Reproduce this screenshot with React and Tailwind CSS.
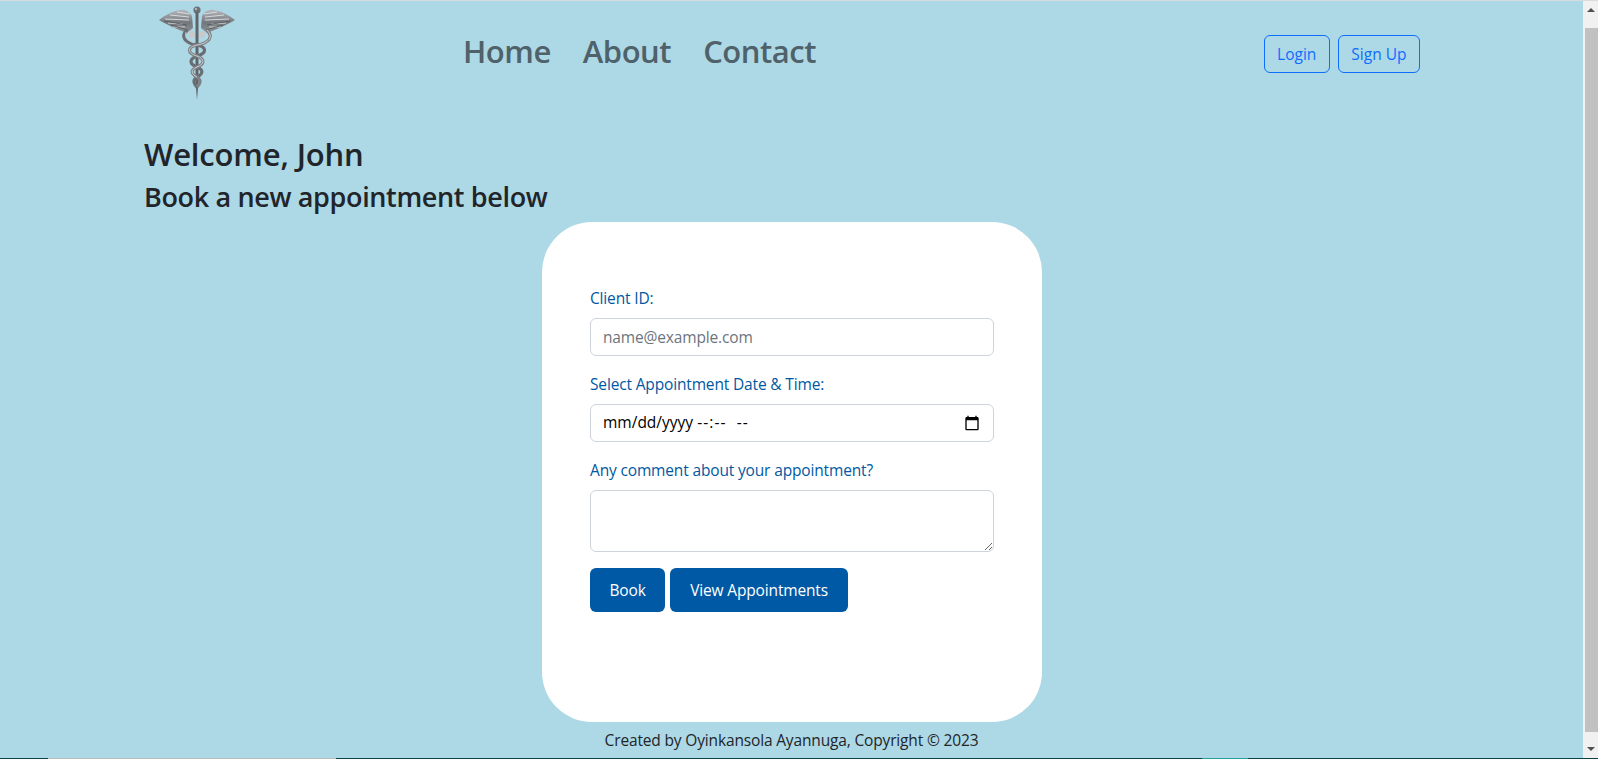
import React from "react";

const Logo = () => (
  <svg width="76" height="95" viewBox="0 0 76 95" className="block">
    <defs>
      <linearGradient id="metal" x1="0" y1="0" x2="0" y2="1">
        <stop offset="0" stopColor="#b4b8bc" />
        <stop offset="0.55" stopColor="#73787d" />
        <stop offset="1" stopColor="#8d9297" />
      </linearGradient>
    </defs>
    {/* wings */}
    <path d="M0 14 C6 9 14 5 21 4 C26 3 31 6 33 10 L34 22 L28 27 C22 25 8 19 0 14Z" fill="url(#metal)" />
    <path d="M76 14 C70 9 62 5 55 4 C50 3 45 6 43 10 L42 22 L48 27 C54 25 68 19 76 14Z" fill="url(#metal)" />
    <path d="M6 13 L30 14 M11 9 L30 11 M18 6 L31 8 M9 17 L24 18 M14 21 L26 21 M70 13 L46 14 M65 9 L46 11 M58 6 L45 8 M67 17 L52 18 M62 21 L50 21" stroke="#dde0e3" strokeWidth="0.9" fill="none" />
    <path d="M5 15 L28 19 M12 19 L29 24 M71 15 L48 19 M64 19 L47 24" stroke="#565a5e" strokeWidth="0.9" fill="none" />
    {/* staff */}
    <circle cx="38" cy="4" r="3.6" fill="#6e7378" />
    <circle cx="37" cy="3" r="1" fill="#c4c8cb" />
    <path d="M36.5 6 L39.5 6 L39.5 76 L38 94 L36.5 76Z" fill="#5f6469" />
    {/* snakes */}
    <path d="M28 24 C21 31 26 37 38 39 C48 41 48 47 38 50 C30 53 30 58 38 61 C45 64 44 68 38 71 C33 74 35 78 38 81" stroke="#696e73" strokeWidth="3.2" fill="none" />
    <path d="M48 24 C55 31 50 37 38 39 C28 41 28 47 38 50 C46 53 46 58 38 61 C31 64 32 68 38 71 C43 74 41 78 38 81" stroke="#7d8287" strokeWidth="3.2" fill="none" />
    <path d="M48 24 C55 31 50 37 38 39 C28 41 28 47 38 50 C46 53 46 58 38 61 C31 64 32 68 38 71" stroke="#d3d6d9" strokeWidth="0.9" fill="none" />
    <path d="M27 26 C25 31 29 35 35 37" stroke="#c2c5c9" strokeWidth="0.9" fill="none" />
    <path d="M29 26 C31 24 34 25 36 27 L36 32 L31 32Z M47 26 C45 24 42 25 40 27 L40 32 L45 32Z" fill="#c6cacd" />
  </svg>
);

const Field = ({ label, children }) => (
  <div className="mb-4">
    <label className="block mb-2 text-[#0058a3] leading-6">{label}</label>
    {children}
  </div>
);

const inputClass = "block w-full h-[38px] px-3 border border-[#ced4da] rounded-md bg-white text-[#212529] placeholder:text-[#6c757d]";

export default function App() {
  return (
    <div className="h-[759px] flex flex-col overflow-hidden bg-[#add8e6] border-t border-[#d9dcde] text-[#212529] text-[15.5px] tracking-[-0.01em] font-['Open_Sans',sans-serif]">
      <div className="flex-1 flex min-h-0">
        <div className="flex-1 flex flex-col min-w-0">
          <header className="h-[102px] flex items-start pl-[159px]">
            <div className="w-[76px] pt-[5px]">
              <Logo />
            </div>
            <nav className="ml-[228px] mt-[29px] flex gap-8 text-[31px] font-semibold leading-[42px] tracking-[-0.015em] text-[#4f6169]">
              <a>Home</a>
              <a>About</a>
              <a>Contact</a>
            </nav>
            <div className="ml-auto mr-[163px] mt-[34px] flex gap-2 tracking-normal">
              <button className="h-[38px] px-[12.5px] pt-px border border-[#0d6efd] rounded-md text-[#0d6efd]">Login</button>
              <button className="h-[38px] px-[12.5px] pt-px border border-[#0d6efd] rounded-md text-[#0d6efd]">Sign Up</button>
            </div>
          </header>
          <div className="pl-[144px] mt-[32px]">
            <h2 className="text-[31px] font-semibold leading-[38px] mb-[7px] tracking-[-0.005em]">Welcome, John</h2>
            <h3 className="text-[27px] font-semibold leading-[34px] tracking-[-0.013em]">Book a new appointment below</h3>
          </div>
          <div className="ml-[542px] mt-[8px] w-[500px] h-[500px] rounded-[50px] bg-white px-12 pt-16">
            <Field label="Client ID:">
              <input type="text" placeholder="name@example.com" className={inputClass} />
            </Field>
            <Field label="Select Appointment Date & Time:">
              <div className={inputClass + " flex items-center justify-between text-black"}>
                <span className="whitespace-pre tracking-normal">mm/dd/yyyy <span className="tracking-[0.07em]">--:--  --</span></span>
                <svg width="16" height="16" viewBox="0 0 24 24" className="mr-[1px]">
                  <path fill="#000" d="M20 3h-1V1h-2v2H7V1H5v2H4c-1.1 0-2 .9-2 2v16c0 1.1.9 2 2 2h16c1.1 0 2-.9 2-2V5c0-1.1-.9-2-2-2zm0 18H4V8h16v13z" />
                </svg>
              </div>
            </Field>
            <Field label="Any comment about your appointment?">
              <textarea className="block w-full h-[62px] px-3 py-1.5 border border-[#ced4da] rounded-md bg-white" />
            </Field>
            <div className="flex gap-[5px]">
              <button className="h-11 pt-0.5 px-[19.5px] rounded-md bg-[#0059a5] text-white">Book</button>
              <button className="h-11 pt-0.5 px-5 rounded-md bg-[#0059a5] text-white">View Appointments</button>
            </div>
          </div>
          <footer className="h-6 mt-[6px] text-center leading-6">Created by Oyinkansola Ayannuga, Copyright © 2023</footer>
        </div>
        <div className="w-[15px] flex flex-col bg-[#f1f1f1]">
          <div className="h-[27px] pt-[7px] flex justify-center">
            <div className="h-0 border-x-[4px] border-x-transparent border-b-[4px] border-b-[#505050]" />
          </div>
          <div className="ml-[2px] h-[704px] bg-[#c1c1c1]" />
          <div className="pt-[15px] flex justify-center">
            <div className="h-0 border-x-[4px] border-x-transparent border-t-[4px] border-t-[#505050]" />
          </div>
        </div>
      </div>
      <div className="h-px flex">
        <div className="w-[48px] bg-[#0f3d48]" />
        <div className="w-[288px] bg-[#bcbcbc]" />
        <div className="w-[866px] bg-[#0f3d48]" />
        <div className="w-[46px] bg-[#2a9d9d]" />
        <div className="flex-1 bg-[#0f3d48]" />
      </div>
    </div>
  );
}
